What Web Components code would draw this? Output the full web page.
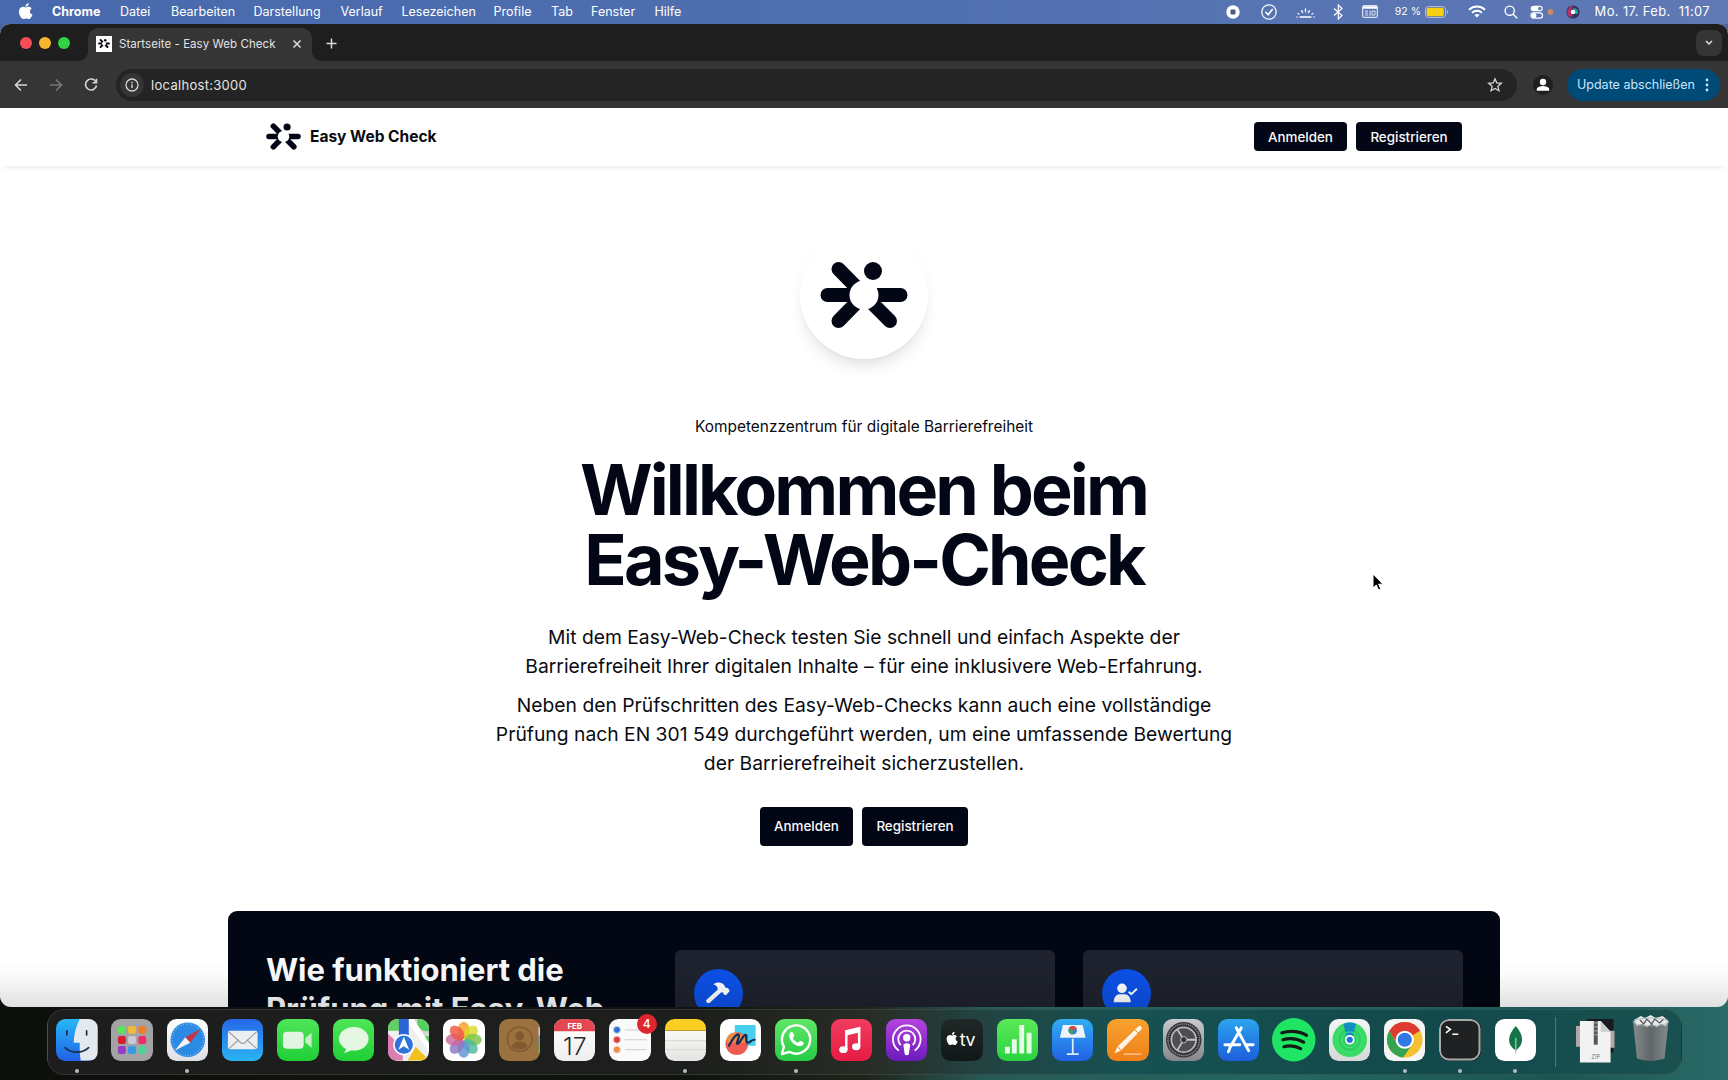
<!DOCTYPE html>
<html lang="de">
<head>
<meta charset="utf-8">
<title>Startseite - Easy Web Check</title>
<style>
  html, body { margin: 0; width: 1728px; height: 1080px; overflow: hidden; }
  body { font-family: Inter, "Liberation Sans", sans-serif; }
</style>
</head>
<body>
<mac-desktop></mac-desktop>

<script>
const define = (name, html) => customElements.define(name, class extends HTMLElement {
  constructor() {
    super();
    this.attachShadow({ mode: 'open' }).innerHTML = html;
  }
});

const APPLE = 'M15.8 12.6c0-2.5 2-3.7 2.1-3.8-1.2-1.7-3-1.9-3.6-2-1.500-.1-3 .9-3.700.9-.8 0-2-.9-3.200-.9C5.700 6.900 4.200 7.800 3.300 9.200c-1.800 3.100-.5 7.700 1.300 10.200.9 1.200 1.900 2.600 3.200 2.500 1.300 0 1.800-.8 3.300-.8s2 .8 3.300.8c1.400 0 2.300-1.200 3.100-2.500 1-1.400 1.400-2.800 1.400-2.900-.1 0-3.100-1.200-3.100-3.900zM13.300 5.300c.7-.8 1.200-2 1-3.200-1 .1-2.200.7-2.900 1.500-.6.7-1.200 1.900-1 3.100 1.100.1 2.200-.6 2.900-1.400z';

define('brand-mark', `
  <style>
    :host { display: block; }
    svg { display: block; width: 100%; height: 100%; }
  </style>
  <svg viewBox="-44 -36 88 72">
    <g stroke="#030615" stroke-width="14" stroke-linecap="round">
      <path d="M0 0L-25.500-26M0 0L-25.500 26M0 0L26 26M-36.500 0H36.500"/>
    </g>
    <circle r="14.500" fill="#fff"/>
    <circle cx="9" cy="-24" r="9" fill="#030615"/>
  </svg>`);

/* macOS menu bar */
define('menu-item', `
  <style>
    :host { display: block; white-space: nowrap; }
    :host([bold]) { font-weight: 700; }
  </style>
  <slot></slot>`);

define('menu-bar', `
  <style>
    :host {
      display: flex; justify-content: space-between; box-sizing: border-box; height: 24px; padding: 0 17px 1px 17px;
      background: linear-gradient(90deg, #4869ad, #4f6fb0 50%, #6079b5);
      color: #fff; font-size: 12.500px; line-height: 23px;
    }
    nav { display: grid; grid-template-columns: 35px 68px 51px 82.500px 87px 61px 92px 57.500px 40px 63.500px auto; }
    svg { display: block; }
    .status { display: grid; grid-template-columns: 35.400px 35px 36.700px 29.300px 32.600px 73.400px 35.700px 26.300px 36px 28.600px 116.400px; align-items: center; }
    .battery { display: flex; align-items: center; justify-content: space-between; width: 54.500px; font-size: 10.500px; letter-spacing: .1px; white-space: nowrap; }
    .clock { white-space: pre; font-size: 12.900px; letter-spacing: .4px; }
  </style>
  <nav>
    <svg width="18" height="20" viewBox="0 0 22 24" style="margin-top:1px"><path fill="#fff" d="${APPLE}"/></svg>
    <menu-item bold>Chrome</menu-item><menu-item>Datei</menu-item><menu-item>Bearbeiten</menu-item>
    <menu-item>Darstellung</menu-item><menu-item>Verlauf</menu-item><menu-item>Lesezeichen</menu-item>
    <menu-item>Profile</menu-item><menu-item>Tab</menu-item><menu-item>Fenster</menu-item><menu-item>Hilfe</menu-item>
  </nav>
  <div class="status">
    <svg width="14" height="14" viewBox="0 0 14 14"><circle cx="7" cy="7" r="6.700" fill="#fff"/><rect x="4.500" y="4.500" width="5" height="5" rx="1" fill="#4c5a80"/></svg>
    <svg width="16" height="16" viewBox="0 0 16 16" fill="none" stroke="#fff" stroke-width="1.200" stroke-linecap="round"><circle cx="8" cy="8" r="7.200"/><path d="M4.800 8.300l2.400 2.500 4-5.300" stroke-width="1.600"/></svg>
    <svg width="19" height="14" viewBox="0 0 19 14" fill="none" stroke="#fff" stroke-width="1.300" stroke-linecap="round"><path d="M1 12h.1M4 12h11M18 12h.1M9.500 4v2.500M5.500 5.700l1.200 1.800M13.500 5.700l-1.200 1.800M2 8.500l1 .5M17 8.500l-1 .5"/></svg>
    <svg width="11" height="16" viewBox="0 0 11 16" fill="none" stroke="#fff" stroke-width="1.200"><path d="M1 4.500l8 7L5.300 15V1L9 4.500l-8 7"/></svg>
    <svg width="16" height="13" viewBox="0 0 16 13" fill="none" stroke="#fff"><rect x=".7" y=".7" width="14.600" height="11.600" rx="1"/><path d="M1 2.500h14" stroke-width="2.500"/><path d="M3 6h3M3 8h3M3 10h3M8 5.500v5.500M10 6h3v4h-3z" opacity=".8"/></svg>
    <div class="battery"><span>92 %</span>
      <svg width="24" height="12" viewBox="0 0 24 12"><rect x=".5" y=".5" width="20" height="11" rx="3" fill="none" stroke="#b4bdd8"/><rect x="1.700" y="1.700" width="17" height="8.600" rx="1.800" fill="#f8cf13"/><path d="M22 4v4c1.500-.5 1.500-3.500 0-4z" fill="#b4bdd8"/></svg></div>
    <svg width="18" height="13" viewBox="0 0 18 13" fill="none" stroke="#fff" stroke-width="2"><path d="M1 4.700c4.500-4.200 11.500-4.200 16 0M4 7.700c2.800-2.700 7.200-2.700 10 0"/><path d="M9 12.500L6.500 10c1.300-1.300 3.700-1.300 5 0z" fill="#fff" stroke="none"/></svg>
    <svg width="14" height="14" viewBox="0 0 14 14" fill="none" stroke="#fff" stroke-width="1.400" stroke-linecap="round"><circle cx="5.700" cy="5.700" r="4.600"/><path d="M9.200 9.200l3.700 3.700"/></svg>
    <svg width="25" height="14" viewBox="0 0 25 14"><rect x=".7" y=".7" width="12" height="5.600" rx="2.800" fill="#fff"/><circle cx="9.800" cy="3.500" r="1.700" fill="#6079b5"/><rect x="1" y="7.900" width="11.500" height="5.300" rx="2.600" fill="none" stroke="#fff" stroke-width="1.200"/><circle cx="4" cy="10.500" r="2.400" fill="#fff"/><circle cx="20.500" cy="7" r="3" fill="#c98a60"/></svg>
    <svg width="14" height="14" viewBox="0 0 16 16"><circle cx="8" cy="8" r="7.500" fill="#343260"/><path d="M1.500 10C1 4 5 1 8 1c-2 3-2 8 0 12-3 1-6 0-6.500-3z" fill="#b3306c"/><path d="M8 4c4-1 6 2 5.500 6-2 1-4 0-5.500-2z" fill="#29a989"/><circle cx="8" cy="8" r="2.600" fill="#f4f5ff"/></svg>
    <span class="clock">Mo. 17. Feb.  11:07</span>
  </div>`);

/* browser chrome */
define('browser-tabs', `
  <style>
    :host { display: flex; align-items: flex-end; height: 37px; background: #1e1e1e; color: #e3e3e3; font-size: 11.500px; }
    .lights { display: flex; gap: 7px; width: 88px; box-sizing: border-box; padding: 1px 0 0 20px; align-self: center; }
    .lights i { width: 12px; height: 12px; border-radius: 50%; }
    .tab {
      display: flex; align-items: center; position: relative; box-sizing: border-box; width: 224px; height: 33px; padding: 0 0 2px 8px;
      background: #353535; border-radius: 10px 10px 0 0;
    }
    .tab::before, .tab::after { content: ""; position: absolute; bottom: 0; width: 9px; height: 9px; }
    .tab::before { left: -9px; background: radial-gradient(circle at 0 0, transparent 8.500px, #353535 9px); }
    .tab::after { right: -9px; background: radial-gradient(circle at 100% 0, transparent 8.500px, #353535 9px); }
    .favicon { display: grid; place-items: center; width: 16px; height: 16px; margin-right: 7px; background: #fff; }
    .favicon brand-mark { width: 12px; height: 11px; }
    .title { flex: 1; white-space: nowrap; letter-spacing: .05px; }
    .close { margin-right: 10px; }
    .plus { margin: 0 auto 12px 14px; }
    .more { display: grid; place-items: center; width: 26px; height: 26px; margin: 0 6px 5px 0; border-radius: 8px; background: #353535; }
    svg { display: block; fill: none; stroke: #dedede; stroke-width: 1.500; }
  </style>
  <div class="lights"><i style="background:#f74c58"></i><i style="background:#f9b42e"></i><i style="background:#30d244"></i></div>
  <div class="tab">
    <span class="favicon"><brand-mark></brand-mark></span>
    <span class="title">Startseite - Easy Web Check</span>
    <svg class="close" width="10" height="10" viewBox="0 0 10 10"><path d="M1.500 1.500l7 7M8.500 1.500l-7 7"/></svg>
  </div>
  <svg class="plus" width="11" height="11" viewBox="0 0 11 11"><path d="M5.500.5v10M.5 5.500h10"/></svg>
  <span class="more"><svg width="8" height="6" viewBox="0 0 8 6"><path d="M1 1l3 3 3-3"/></svg></span>`);

define('browser-toolbar', `
  <style>
    :host { display: flex; align-items: center; box-sizing: border-box; height: 47px; padding: 0 8px 0 14px; background: #353535; color: #e3e3e3; }
    svg { display: block; flex: none; fill: none; stroke: #d5d5d5; stroke-width: 1.600; }
    .nav { display: flex; gap: 21px; width: 102px; }
    .omnibox { display: flex; align-items: center; flex: 1; height: 32px; box-sizing: border-box; padding: 0 14px 0 4px; border-radius: 16px; background: #242424; font-size: 13px; }
    .info { display: grid; place-items: center; width: 24px; height: 24px; margin-right: 7px; border-radius: 50%; background: #353535; }
    .url { flex: 1; letter-spacing: .3px; }
    .profile { display: grid; place-items: center; width: 20px; height: 20px; margin: 0 14px 0 16px; border-radius: 50%; background: #1f1f1f; }
    .update { display: flex; align-items: center; justify-content: space-between; box-sizing: border-box; width: 153px; height: 32px; padding: 0 11px 0 10px; border-radius: 16px; background: #004a77; color: #c9e7ff; font-size: 12.500px; white-space: nowrap; }
  </style>
  <div class="nav">
    <svg width="14" height="14" viewBox="0 0 14 14"><path d="M13 7H2M7 1.500L1.500 7 7 12.500"/></svg>
    <svg width="14" height="14" viewBox="0 0 14 14" style="stroke:#777"><path d="M1 7h11M7 1.500L12.500 7 7 12.500"/></svg>
    <svg width="14" height="14" viewBox="0 0 14 14"><path d="M12 4A5.500 5.500 0 1 0 12.500 7.500M12.500.8V4.800H8.500"/></svg>
  </div>
  <div class="omnibox">
    <span class="info"><svg width="14" height="14" viewBox="0 0 14 14"><circle cx="7" cy="7" r="6" stroke-width="1.300"/><path d="M7 6.200V10M7 3.800v1.400" stroke-width="1.400"/></svg></span>
    <span class="url">localhost:3000</span>
    <svg width="16" height="16" viewBox="0 0 16 16"><path d="M8 1.800l1.800 4.100 4.500.4-3.400 3 1 4.400L8 11.400l-3.900 2.300 1-4.400-3.400-3 4.500-.4z" stroke-width="1.300"/></svg>
  </div>
  <span class="profile"><svg width="14" height="14" viewBox="0 0 14 14" style="fill:#fff;stroke:none"><circle cx="7" cy="4" r="3.200"/><path d="M.8 12.800V11c0-2 4-3 6.200-3s6.200 1 6.200 3v1.800z"/></svg></span>
  <div class="update"><span>Update abschließen</span>
    <svg width="4" height="14" viewBox="0 0 4 14" style="fill:#c9e7ff;stroke:none"><circle cx="2" cy="2" r="1.400"/><circle cx="2" cy="7" r="1.400"/><circle cx="2" cy="12" r="1.400"/></svg></div>`);

/* page content */
define('page-button', `
  <style>
    :host {
      display: flex; align-items: center; justify-content: center; box-sizing: border-box; width: var(--w, 93px); height: var(--h, 29px);
      border-radius: 4px; background: #030615; color: #f8fafc; font-size: 13.400px; font-weight: 500; white-space: nowrap;
    }
    :host([wide]) { --w: 106px; }
  </style>
  <slot></slot>`);

define('site-header', `
  <style>
    :host { display: flex; align-items: center; box-sizing: border-box; height: 58px; padding: 0 266px 1px; background: #fff; box-shadow: 0 5px 6px -4px rgba(0, 0, 0, .1); color: #0a0b10; }
    brand-mark { width: 35px; height: 29px; margin-right: 9px; }
    b { flex: 1; font-size: 15.500px; font-weight: 700; }
    .actions { display: flex; gap: 9px; }
  </style>
  <brand-mark></brand-mark><b>Easy Web Check</b>
  <div class="actions"><page-button>Anmelden</page-button><page-button wide>Registrieren</page-button></div>`);

define('site-hero', `
  <style>
    :host { display: flex; flex-direction: column; align-items: center; padding-top: 65px; color: #0a0b10; text-align: center; }
    .disc { display: grid; place-items: center; width: 128px; height: 128px; border-radius: 50%; background: #fff; box-shadow: 0 10px 16px -3px rgba(0, 0, 0, .1), 0 4px 6px -4px rgba(0, 0, 0, .08); }
    .disc brand-mark { width: 88px; height: 72px; }
    .kicker { margin: 56px 0 0; font-size: 15.450px; line-height: 24px; }
    h1 { margin: 16px 0 0; color: #030615; font-size: 70px; line-height: 69.500px; font-weight: 700; letter-spacing: -2.850px; text-indent: -1px; }
    p { margin: 0; font-size: 19.300px; line-height: 29px; white-space: nowrap; }
    .intro { margin-top: 29px; }
    .more { margin-top: 9.500px; }
    .actions { display: flex; gap: 9px; --h: 39px; margin-top: 29px; }
  </style>
  <div class="disc"><brand-mark></brand-mark></div>
  <div class="kicker">Kompetenzzentrum für digitale Barrierefreiheit</div>
  <h1>Willkommen beim<br>Easy-Web-Check</h1>
  <p class="intro">Mit dem Easy-Web-Check testen Sie schnell und einfach Aspekte der<br>Barrierefreiheit Ihrer digitalen Inhalte – für eine inklusivere Web-Erfahrung.</p>
  <p class="more">Neben den Prüfschritten des Easy-Web-Checks kann auch eine vollständige<br>Prüfung nach EN 301 549 durchgeführt werden, um eine umfassende Bewertung<br>der Barrierefreiheit sicherzustellen.</p>
  <div class="actions"><page-button>Anmelden</page-button><page-button wide>Registrieren</page-button></div>`);

define('step-card', `
  <style>
    :host { display: block; box-sizing: border-box; width: 380px; height: 240px; padding: 19px; border-radius: 6px; background: #1e222e; }
    div { display: grid; place-items: center; width: 49px; height: 49px; border-radius: 50%; background: #0c50e6; }
  </style>
  <div><slot></slot></div>`);

define('how-it-works', `
  <style>
    :host { display: flex; box-sizing: border-box; width: 1272px; height: 300px; margin: 65.500px auto 0; padding: 38.500px 38px; border-radius: 9px; background: #020713; color: #f8fafc; }
    h2 { flex: none; width: 408.500px; margin: 0; font-size: 31px; line-height: 39px; font-weight: 700; letter-spacing: -.05px; white-space: nowrap; }
    .steps { display: flex; gap: 28px; }
    step-card { flex: none; }
    svg { display: block; }
  </style>
  <h2>Wie funktioniert die<br>Prüfung mit Easy-Web-</h2>
  <div class="steps">
    <step-card><svg width="26" height="26" viewBox="0 0 26 26" fill="#fff"><path d="M8.300 4.300C10.500 2.600 13 2.300 15 2.700c2 .4 3.300 1 4 2.300l1.700 2.700L23 8l1.700 3-3.700 4.300-2.300-.7-.7-2.400-2 .3L4.800 22.800c-2 1.500-4.600-1-3.300-3L12.700 9.700 12.300 7C11 5.500 10 4.900 8.300 4.300z"/></svg></step-card>
    <step-card><svg width="26" height="26" viewBox="0 0 26 26" fill="#fff"><circle cx="9" cy="8.300" r="4.800"/><path d="M.7 22.300c0-5 2.500-8 6-8h5c3.500 0 6 3 6 8z"/><path d="M15.700 11.800l2.600 2.500 5.600-5.500" fill="none" stroke="#fff" stroke-width="1.900"/></svg></step-card>
  </div>`);

define('browser-window', `
  <style>
    :host { display: flex; flex-direction: column; height: 983px; overflow: hidden; border-radius: 10px 10px 11px 11px; background: #fff; position: relative; }
    browser-tabs, browser-toolbar, site-header { flex: none; }
    main { flex: 1; min-height: 0; overflow: hidden; }
    /* shadow that the dock throws up over the page */
    .shade { position: absolute; inset: auto 0 0; height: 46px; background: linear-gradient(transparent, rgba(0, 0, 0, .025) 35%, rgba(0, 0, 0, .12)); }
  </style>
  <browser-tabs></browser-tabs><browser-toolbar></browser-toolbar><site-header></site-header>
  <main><site-hero></site-hero><how-it-works></how-it-works></main>
  <div class="shade"></div>`);

/* dock */
define('dock-icon', `
  <style>
    :host { display: block; width: 41.500px; height: 41.500px; border-radius: 9.500px; overflow: hidden; background: var(--bg, none); }
    ::slotted(svg) { display: block; width: 100%; height: 100%; }
    :host([plain]) { overflow: visible; border-radius: 0; }
  </style>
  <slot></slot>`);

const petals = ['#f5a11f', '#d9d92b', '#7cc344', '#4fb99b', '#5d95d6', '#8d74c4', '#c9669a', '#ef5844']
  .map((c, i) => `<ellipse cx="21" cy="11.500" rx="6" ry="8.800" fill="${c}" opacity=".82" transform="rotate(${i * 45} 21 21)"/>`).join('');
const pads = ['#5be35a', '#f3bb35', '#f17f26', '#d81d30', '#c9c9cf', '#ef2d62', '#9a3bc8', '#3598e6', '#4cd595']
  .map((c, i) => `<rect x="${7 + i % 3 * 10.3}" y="${7 + Math.floor(i / 3) * 10.2}" width="8" height="8" rx="2" fill="${c}"/>`).join('');

// background, picture in a 42x42 box, running, badge, extra attributes
const APPS = [
  ['linear-gradient(#27b8f5, #2161e8)', '<path d="M24 0c-4 8-6 16-6 24h6c0 6 0 12 1 18h17V0z" fill="#e4e8ef"/><path d="M11 12v4M31 12v4M9 29c6 6 18 6 24 0" fill="none" stroke="#173052" stroke-width="1.700" stroke-linecap="round"/>', 1],
  ['#a3a3a5', pads],
  ['linear-gradient(#fff, #dfe0e4)', '<circle cx="21" cy="21" r="17.500" fill="#2a8ae4"/><circle cx="21" cy="21" r="16" fill="none" stroke="#8fc4f2" stroke-width="1.500" stroke-dasharray=".7 2"/><path d="M34 10L23.500 24 18.500 18.500z" fill="#c93444"/><path d="M8 32L18.500 18.500 23.500 24z" fill="#f3f3f3"/>', 1],
  ['linear-gradient(#2668e8, #2bb4f3)', '<rect x="6" y="12" width="30" height="18.500" rx="2" fill="#eceef0"/><path d="M7 13l12 11q2 1.500 4 0L35 13M7 30l10-9M35 30l-10-9" fill="none" stroke="#999ca2" stroke-width="1.100"/>'],
  ['linear-gradient(#4fe55a, #20cf36)', '<rect x="6" y="13" width="21" height="17" rx="4" fill="#e2f5e2"/><path d="M28.500 19.500l6.500-5.500v15l-6.500-5.500z" fill="#c8efc9"/>'],
  ['linear-gradient(#4fe55a, #20cf36)', '<ellipse cx="21" cy="20" rx="15" ry="12" fill="#e4f7e3"/><path d="M13 28c1 3-.5 5-2.500 6 4 0 7-1.500 8-4z" fill="#e4f7e3"/>'],
  ['#efeff0', '<path d="M20 0h22v34z" fill="#56cf5e"/><circle cx="39" cy="3" r="12" fill="none" stroke="#d4d8d5" stroke-width="5"/><path d="M0 0h12v12H0z" fill="#62cf66"/><path d="M0 15l15 14v13H0z" fill="#dc7eb4"/><path d="M42 42H20l8-14z" fill="#f2c11d"/><path d="M18 0l24 34v-9L26 0z" fill="#fff"/><path d="M11 0h10v20H11z" fill="#2a64d5"/><circle cx="16" cy="26" r="10" fill="#2f74dc" stroke="#fff" stroke-width="1.500"/><path d="M16 18l5.500 13-5.500-3.500-5.500 3.500z" fill="#fff"/>'],
  ['#fff', petals],
  ['#9c7140', '<circle cx="21" cy="20.500" r="12.500" fill="none" stroke="#80592f" stroke-width="1.500"/><circle cx="21" cy="17" r="4.500" fill="#80592f"/><path d="M13 28c0-7 16-7 16 0-4 4-12 4-16 0z" fill="#80592f"/><path d="M40 8h2v9h-2z" fill="#cbd3d4"/><path d="M40 17h2v9h-2z" fill="#4ba6cc"/><path d="M40 26h2v9h-2z" fill="#60b65d"/>'],
  ['linear-gradient(#fff, #eee)', '<path d="M0 0h42v12.500H0z" fill="#e34852"/><text x="21" y="9.800" font-size="8" font-weight="700" fill="#fff" text-anchor="middle">FEB</text><text x="21" y="36" font-size="25" font-weight="300" fill="#29292b" text-anchor="middle">17</text>'],
  ['#fafafa', '<path d="M16 11h22M16 21h22M16 31h22" stroke="#ccc"/><circle cx="8" cy="11" r="3.500" fill="#2b72dc" stroke="#bcd" /><circle cx="8" cy="21" r="3.500" fill="#e0393f" stroke="#ebc3c5"/><circle cx="8" cy="31" r="3.500" fill="#f18d48" stroke="#f1d3c0"/>', 0, '<b>4</b>'],
  ['linear-gradient(#fbcf22 0 11px, #b99a35 11px 12px, #f8f8f6 12px, #e4e4e2)', '<path d="M0 22h42M0 31h42" stroke="#d4d4d0"/>', 1],
  ['#fff', '<path d="M15 6h21v21H15z" fill="#46cfee"/><circle cx="17" cy="25" r="11.500" fill="#ef5b52"/><path d="M7 24c-1-8 3-10 9-10 6 0 10 4 11 10z" fill="#e99745" opacity=".8"/><path d="M9 27c4-7 8-13 10-11 1.500 2-4 10-1 9 3-1 5-9 8-9 2 0-1 8 2 8s3-3 7-3" fill="none" stroke="#152c58" stroke-width="2.200" stroke-linecap="round"/>'],
  ['linear-gradient(#60e767, #27cb45)', '<path d="M7 35.500l2-7.500a14.300 14.300 0 1 1 5.300 5.200z" fill="none" stroke="#fff" stroke-width="2.400" stroke-linejoin="round"/><path d="M15 14.500c2-2.500 3.500-1 4.500 2.500l-1.500 2.500c1 2 3 3.500 5 4.500l2.500-2c4 1.500 4.500 2.500 2.500 4.500-6 4.500-16-6-13-12z" fill="#fff"/>', 1],
  ['linear-gradient(#f03c5f, #e61c43)', '<path d="M15.500 31V12.500l13-3V28" fill="none" stroke="#fff" stroke-width="2.500"/><path d="M14.500 12l15-3.500v5l-15 3.500z" fill="#fff"/><ellipse cx="12.500" cy="31" rx="4.200" ry="3.500" fill="#fff"/><ellipse cx="25.500" cy="28" rx="4.200" ry="3.500" fill="#fff"/>'],
  ['linear-gradient(#b543df, #6b1bbb)', '<g fill="none" stroke="#fff" stroke-width="1.800"><path d="M13 32a14 14 0 1 1 16 0M15 26.500a8.600 8.600 0 1 1 12 0"/></g><circle cx="21" cy="19" r="3.700" fill="#fff"/><path d="M17.500 26q3.500-3 7 0l-1.500 10q-2 1.500-4 0z" fill="#fff"/>'],
  ['linear-gradient(#202927, #101817)', `<path transform="translate(4 11.500) scale(.68)" fill="#fff" d="${APPLE}"/><text x="19" y="27" font-size="18" fill="#fff" letter-spacing="-.5">tv</text>`],
  ['linear-gradient(#5bea58, #29d240)', '<path d="M8 28h5v7H8zM15 20.500h5V35h-5zM22.500 6h5v29h-5zM30 14h5v21h-5z" fill="#e7fbe6"/>'],
  ['linear-gradient(#31aef4, #2160e4)', '<path d="M11 6h20l3 13H8z" fill="#edf3fa"/><circle cx="21" cy="11.500" r="4.300" fill="#3c7bd9"/><path d="M21 11.500l-4-1.800a4.300 4.300 0 0 1 8 0z" fill="#df4639"/><path d="M21 11.500l-4-1.800a4.300 4.300 0 0 0 4 6z" fill="#3ea455"/><path d="M21 20v15M15 35.500h12" stroke="#dcecff" stroke-width="1.800"/>'],
  ['linear-gradient(#f9a330, #ee7f18)', '<path d="M7.500 35l3-7L31 8q3-2 4 0 1 1.500-1 3.500L14 32z" fill="#fff3e4"/><path d="M11 28l3 3.500M28 11l4 3.500" stroke="#d88634" stroke-width="1"/><path d="M17 35.500h18" stroke="#fbd1a3" stroke-width="1.200"/>'],
  ['linear-gradient(#c8cace, #85878a)', '<circle cx="21" cy="21" r="18" fill="#37383b"/><circle cx="21" cy="21" r="16" fill="none" stroke="#9c9da0" stroke-width="1.200" stroke-dasharray="1.200 1"/><circle cx="21" cy="21" r="12.500" fill="#4d4e52" stroke="#bbb" stroke-width="1.700"/><path d="M21 21l-6.500-10.500M21 21h12.500M21 21l-6.500 10.500" stroke="#c2c3c5" stroke-width="1.800"/><circle cx="21" cy="21" r="3.200" fill="#35363a" stroke="#bbb"/>'],
  ['linear-gradient(#2ba4ee, #1d5edb)', '<path d="M23.500 9L12 29M18.500 9L31 32M7 26h15M28 26h7.500M11.500 31l-1 2" stroke="#fff" stroke-width="3" stroke-linecap="round"/>'],
  ['none', '<circle cx="21" cy="21" r="22" fill="#1fe565"/><path d="M9 14c9-2.500 18-1.500 25 2.500M10 21c7-2 15-1 21 2.500M11 28c6-1.500 12-.8 17 2" fill="none" stroke="#101c15" stroke-width="3.200" stroke-linecap="round"/>', 0, '', 'plain'],
  ['linear-gradient(#f5f5f5, #d6d8d8)', '<circle cx="21" cy="21" r="17.500" fill="#37dc65"/><circle cx="21" cy="21" r="12.500" fill="#2ed15e" stroke="#4fe277"/><path d="M14.500 5q6.500-3 13 0L23.500 20h-5z" fill="#138ec2"/><circle cx="21" cy="21" r="8" fill="none" stroke="#4fe277"/><circle cx="21" cy="21" r="4" fill="#226de0" stroke="#fff" stroke-width="1.700"/>'],
  ['#f5f5f5', '<circle cx="21" cy="21" r="18" fill="#f7c02f"/><path d="M21 21L5.400 12a18 18 0 0 1 31.200 0z" fill="#df3a30"/><path d="M5.400 12a18 18 0 0 0 14 27L29 25H13z" fill="#35a450"/><path d="M5.400 12H36.600L21 13l-7.500 12z" fill="#df3a30"/><circle cx="21" cy="21" r="8.200" fill="#3277e2" stroke="#fff" stroke-width="2"/>', 1],
  ['#202122', '<rect x="1" y="1" width="40" height="40" rx="9" fill="none" stroke="#a5aaab" stroke-width="2"/><path d="M7 7.500l4.500 3L7 14M13.500 15.500h6" fill="none" stroke="#fff" stroke-width="1.600"/>', 1],
  ['#fff', '<path d="M21 7c9 10 8 19 0 25C12 26 12 17 21 7z" fill="#147348"/><path d="M21 19v16" stroke="#a9c9b5" stroke-width="1.300"/>', 1],
];

define('dock-bar', `
  <style>
    :host { display: flex; box-sizing: border-box; width: 1635px; height: 66px; padding: 9px 8px 0; border-radius: 17px; border: 1px solid rgba(130, 140, 135, .2);
      background: linear-gradient(90deg, #1c1d1c, #1d1f1d 40%, #292b25 50%, #224341 57%, #175152 66%, #12494b 86%, #1a5150); }
    .slot { display: flex; flex: none; flex-direction: column; align-items: center; gap: 8.500px; width: 41.500px; margin-right: 13.840px; position: relative; }
    .dot { width: 4px; height: 4px; border-radius: 50%; background: #b5bbb8; }
    b { position: absolute; top: -5px; right: -6px; width: 20px; height: 20px; border-radius: 50%; background: #df252d; color: #fff; font-size: 12px; font-weight: 500; line-height: 20px; text-align: center; }
    .rule { flex: none; width: 1px; height: 50px; margin: -2px 19px 0 5px; background: #4e7778; }
  </style>
  ${APPS.map(([bg, art, running, badge = '', attr = '']) => `<div class="slot"><dock-icon ${attr} style="--bg:${bg}"><svg viewBox="0 0 42 42" ${attr && 'overflow="visible"'}>${art}</svg></dock-icon>${running ? '<span class="dot"></span>' : ''}${badge}</div>`).join('')}
  <div class="rule"></div>
  <div class="slot"><dock-icon plain><svg viewBox="0 0 42 42" overflow="visible">
    <path d="M12 0h27v34H12z" fill="#171b20"/><path d="M1 7h5v21H1zM35 12h5v17h-5z" fill="#b1a8a5"/>
    <path d="M5 2h21l10 11v31H5z" fill="#f2f2f2"/><path d="M26 2v11h10z" fill="#c9cccd"/>
    <path d="M19 2h4v24h-4z" fill="#55585a"/><path d="M19 4h4M19 8h4M19 12h4M19 16h4" stroke="#c5c5c5" stroke-width=".8"/>
    <text x="21" y="40.500" font-size="6" fill="#777" text-anchor="middle">ZIP</text></svg></dock-icon></div>
  <div class="slot"><dock-icon plain><svg viewBox="0 0 42 42" overflow="visible">
    <defs><linearGradient id="bin"><stop offset="0" stop-color="#858b8d"/><stop offset=".5" stop-color="#5f6669"/><stop offset="1" stop-color="#858b8d"/></linearGradient></defs>
    <path d="M3 2h36l-4 38q-14 5-28 0z" fill="url(#bin)"/>
    <path d="M4 1l7-4 4 2 6-3 5 3 7-2 6 5-3 5-5-2-4 3-5-3-5 3-5-3-5 2z" fill="#e7e9e8"/>
    <path d="M10 1l4 4 3-5 5 5 3-5 5 4 4-4" fill="none" stroke="#565d60" stroke-width="1.300"/>
    <ellipse cx="21" cy="3" rx="18" ry="4" fill="none" stroke="#a5abad" stroke-width=".8"/></svg></dock-icon></div>`);

define('mac-desktop', `
  <style>
    /* wallpaper: menu bar blue behind the window's top corners, dark to teal at the foot */
    :host {
      display: flex; flex-direction: column; position: relative; width: 1728px; height: 1080px; overflow: hidden;
      background:
        linear-gradient(#4d63a0, #4d63a0) 0 0 / 100% 40px no-repeat,
        linear-gradient(90deg, #0c0f0b, #12150f 40%, #20241b 50%, #275a55 57%, #246660 75%, #1c5553 90%, #2a6b67);
    }
    browser-window { flex: none; }
    dock-bar { margin: 2px 0 0 47px; }
    .cursor { position: absolute; left: 1372px; top: 573px; }
  </style>
  <menu-bar></menu-bar>
  <browser-window></browser-window>
  <dock-bar></dock-bar>
  <svg class="cursor" width="12" height="19" viewBox="0 0 12 19"><path d="M1 1v14l3.300-3 2.200 5 2.300-1-2.200-4.800H11z" fill="#000" stroke="#fff"/></svg>`);
</script>
</body>
</html>
